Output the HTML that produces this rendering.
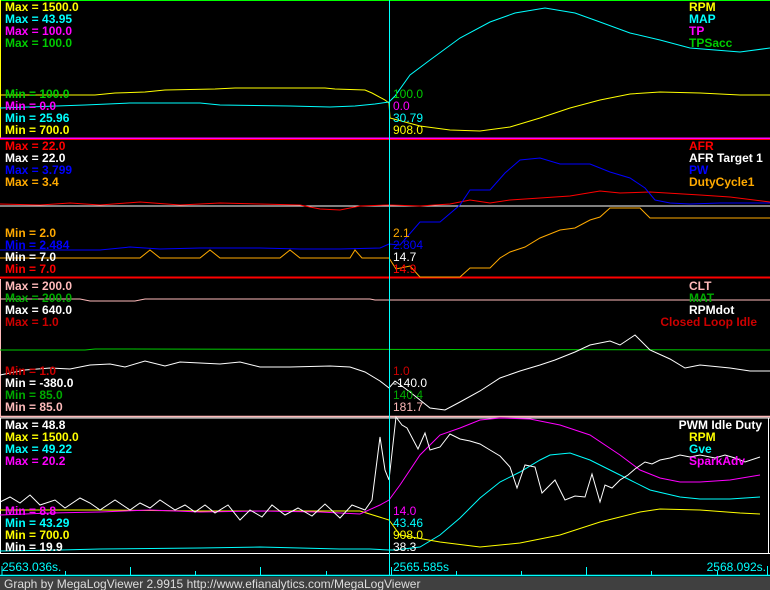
<!DOCTYPE html><html><head><style>body{margin:0;background:#000;width:770px;height:590px;overflow:hidden}svg{display:block}text{font-family:"Liberation Sans",sans-serif;font-size:12px}.b{font-weight:bold}</style></head><body>
<svg width="770" height="590" xmlns="http://www.w3.org/2000/svg">
<rect width="770" height="590" fill="#000"/>
<g fill="none" stroke-width="1">
<line x1="0" y1="0.5" x2="770" y2="0.5" stroke="#0f0"/>
<line x1="0.5" y1="0" x2="0.5" y2="138" stroke="#ff0"/>
<line x1="0" y1="138.5" x2="770" y2="138.5" stroke="#f0f" stroke-width="2"/>
<line x1="0" y1="139.5" x2="770" y2="139.5" stroke="#f00"/>
<line x1="0" y1="277.5" x2="770" y2="277.5" stroke="#f00" stroke-width="2"/>
<line x1="0.5" y1="279" x2="0.5" y2="416" stroke="#fbb"/>
<line x1="0" y1="416.5" x2="770" y2="416.5" stroke="#fbb" stroke-width="1.5"/>
<line x1="0" y1="418" x2="770" y2="418" stroke="#fff"/>
<line x1="0.5" y1="418" x2="0.5" y2="553" stroke="#fff"/>
<line x1="0" y1="553.5" x2="770" y2="553.5" stroke="#fff"/>
<line x1="768.5" y1="418" x2="768.5" y2="553" stroke="#fff"/>
<polyline stroke="#ff0" points="0,95 95,95 115,93 145,92 165,90 215,89 235,88 325,88 335,89 365,90 372,93 385,100 389,103 390,118 420,126 450,130 480,131 510,127 540,118 570,108 600,100 630,94 660,92 700,93 740,95 770,95"/>
<polyline stroke="#0ff" points="0,108 85,105 130,103 200,103 220,105 290,106 330,107 355,106 375,104 389,102 395,96 410,75 430,60 460,38 490,22 515,13 545,8 575,13 600,22 630,33 660,40 690,48 715,50 740,52 770,48"/>
<polyline stroke="#fff" points="0,206 770,206"/>
<polyline stroke="#f00" points="0,204 40,205 70,203 100,205 140,202 180,205 220,203 260,204 300,205 320,209 340,210 360,206 389,205 420,206 450,204 470,200 490,203 510,200 540,198 570,196 600,191 620,193 650,192 700,195 730,197 770,202"/>
<polyline stroke="#00f" points="0,250 100,250 130,247 160,249 200,248 260,248 300,249 340,249 380,248 389,244 400,245 420,222 440,222 460,205 470,190 490,190 505,173 520,160 540,158 560,164 590,164 610,172 630,178 645,188 655,200 670,203 690,204 720,203 770,203"/>
<polyline stroke="#fa0" points="0,258 140,258 150,250 160,258 200,258 210,250 220,258 280,258 290,250 300,258 350,258 355,250 362,258 389,258 396,269 410,266 420,277 460,277 470,268 490,268 500,258 510,252 525,247 540,238 560,230 575,228 590,220 600,217 610,208 640,208 650,218 770,218"/>
<polyline stroke="#fbb" points="0,299 80,299 90,301 135,301 145,299 370,299 375,300 389,300 770,300"/>
<polyline stroke="#0c0" points="0,350 85,350 95,349 770,350"/>
<polyline stroke="#fff" points="0,375 25,370 50,368 70,369 90,365 110,364 125,367 145,361 165,366 180,362 200,363 220,364 240,362 260,367 290,367 330,366 350,367 365,372 380,381 389,388 395,381 410,392 430,408 445,410 460,402 480,391 500,378 520,371 540,365 555,360 575,352 590,345 610,341 620,345 635,335 650,350 670,359 685,368 700,365 730,368 750,371 770,371"/>
<polyline stroke="#0ff" points="0,551 60,550 100,549 200,548 260,547 300,548 340,549 370,549 389,550 395,550 420,547 440,535 460,518 480,498 500,482 520,472 540,460 550,455 570,453 590,460 610,470 630,480 650,490 680,497 700,499 730,499 760,497"/>
<polyline stroke="#ff0" points="0,510 100,510 200,511 300,511 360,511 389,520 400,535 440,542 480,547 520,543 560,535 600,522 640,512 660,509 700,510 740,513 760,514"/>
<polyline stroke="#f0f" points="0,515 50,513 100,512 150,510 200,512 260,511 320,512 360,514 380,505 389,500 400,485 420,455 440,435 460,428 480,420 500,418 530,419 560,425 590,435 620,455 640,470 660,478 680,482 700,482 730,480 760,475"/>
<polyline stroke="#fff" points="0,502 10,497 20,503 30,495 40,505 55,500 65,508 80,498 90,503 100,510 115,500 130,510 140,503 150,508 160,500 175,510 185,505 195,512 205,505 215,513 228,505 240,520 250,510 262,517 272,505 285,515 298,508 312,516 325,504 340,518 352,505 365,510 372,500 380,437 385,470 389,480 396,417 402,425 407,428 418,449 425,433 430,450 440,447 450,434 460,439 470,441 480,444 490,450 500,456 510,467 517,488 525,465 535,467 542,493 555,480 565,500 575,496 585,497 592,474 600,502 605,485 612,488 620,480 628,475 635,469 645,462 652,464 660,460 670,458 680,455 690,457 700,455 715,458 725,455 735,458 745,462 760,457"/>
<line x1="389.5" y1="0" x2="389.5" y2="576" stroke="#0ff"/>
<line x1="0" y1="575.5" x2="770" y2="575.5" stroke="#0ff" stroke-width="1.5"/>
<g stroke="#0ff"><line x1="2" y1="566" x2="2" y2="576"/><line x1="65.5" y1="571" x2="65.5" y2="576"/><line x1="130.5" y1="567" x2="130.5" y2="576"/><line x1="195.5" y1="571" x2="195.5" y2="576"/><line x1="260.5" y1="567" x2="260.5" y2="576"/><line x1="326.5" y1="571" x2="326.5" y2="576"/><line x1="391.5" y1="567" x2="391.5" y2="576"/><line x1="456.5" y1="571" x2="456.5" y2="576"/><line x1="521.5" y1="571" x2="521.5" y2="576"/><line x1="586.5" y1="567" x2="586.5" y2="576"/><line x1="651.5" y1="571" x2="651.5" y2="576"/><line x1="717.5" y1="571" x2="717.5" y2="576"/><line x1="767.5" y1="566" x2="767.5" y2="576"/></g>
</g>
<rect x="0" y="577" width="770" height="13" fill="#404040"/>
<text x="4" y="588" fill="#ddd" font-size="12">Graph by MegaLogViewer 2.9915 http://www.efianalytics.com/MegaLogViewer</text>
<g fill="#0ff"><text x="2" y="571">2563.036s.</text><text x="393" y="571">2565.585s</text><text x="766" y="571" text-anchor="end">2568.092s.</text></g>
<g class="b">
<text x="5" y="11" fill="#ff0">Max = 1500.0</text><text x="5" y="23" fill="#0ff">Max = 43.95</text><text x="5" y="35" fill="#f0f">Max = 100.0</text><text x="5" y="47" fill="#0c0">Max = 100.0</text>
<text x="5" y="98" fill="#0c0">Min = 100.0</text><text x="5" y="110" fill="#f0f">Min = 0.0</text><text x="5" y="122" fill="#0ff">Min = 25.96</text><text x="5" y="134" fill="#ff0">Min = 700.0</text>
<text x="689" y="11" fill="#ff0">RPM</text><text x="689" y="23" fill="#0ff">MAP</text><text x="689" y="35" fill="#f0f">TP</text><text x="689" y="47" fill="#0c0">TPSacc</text>
<text x="5" y="150" fill="#f00">Max = 22.0</text><text x="5" y="162" fill="#fff">Max = 22.0</text><text x="5" y="174" fill="#00f">Max = 3.799</text><text x="5" y="186" fill="#fa0">Max = 3.4</text>
<text x="5" y="237" fill="#fa0">Min = 2.0</text><text x="5" y="249" fill="#00f">Min = 2.484</text><text x="5" y="261" fill="#fff">Min = 7.0</text><text x="5" y="273" fill="#f00">Min = 7.0</text>
<text x="689" y="150" fill="#f00">AFR</text><text x="689" y="162" fill="#fff">AFR Target 1</text><text x="689" y="174" fill="#00f">PW</text><text x="689" y="186" fill="#fa0">DutyCycle1</text>
<text x="5" y="290" fill="#fbb">Max = 200.0</text><text x="5" y="302" fill="#0a0">Max = 200.0</text><text x="5" y="314" fill="#fff">Max = 640.0</text><text x="5" y="326" fill="#c00">Max = 1.0</text>
<text x="5" y="375" fill="#c00">Min = 1.0</text><text x="5" y="387" fill="#fff">Min = -380.0</text><text x="5" y="399" fill="#0a0">Min = 85.0</text><text x="5" y="411" fill="#fbb">Min = 85.0</text>
<text x="689" y="290" fill="#fbb">CLT</text><text x="689" y="302" fill="#0a0">MAT</text><text x="689" y="314" fill="#fff">RPMdot</text><text x="757" y="326" fill="#c00" text-anchor="end">Closed Loop Idle</text>
<text x="5" y="429" fill="#fff">Max = 48.8</text><text x="5" y="441" fill="#ff0">Max = 1500.0</text><text x="5" y="453" fill="#0ff">Max = 49.22</text><text x="5" y="465" fill="#f0f">Max = 20.2</text>
<text x="5" y="515" fill="#f0f">Min = 8.8</text><text x="5" y="527" fill="#0ff">Min = 43.29</text><text x="5" y="539" fill="#ff0">Min = 700.0</text><text x="5" y="551" fill="#fff">Min = 19.9</text>
<text x="762" y="429" fill="#fff" text-anchor="end">PWM Idle Duty</text><text x="689" y="441" fill="#ff0">RPM</text><text x="689" y="453" fill="#0ff">Gve</text><text x="689" y="465" fill="#f0f">SparkAdv</text>
</g>
<g>
<text x="393" y="98" fill="#0c0">100.0</text><text x="393" y="110" fill="#f0f">0.0</text><text x="393" y="122" fill="#0ff">30.79</text><text x="393" y="134" fill="#ff0">908.0</text>
<text x="393" y="237" fill="#fa0">2.1</text><text x="393" y="249" fill="#00f">2.804</text><text x="393" y="261" fill="#fff">14.7</text><text x="393" y="273" fill="#f00">14.9</text>
<text x="393" y="375" fill="#c00">1.0</text><text x="393" y="387" fill="#fff">-140.0</text><text x="393" y="399" fill="#0a0">140.4</text><text x="393" y="411" fill="#fbb">181.7</text>
<text x="393" y="515" fill="#f0f">14.0</text><text x="393" y="527" fill="#0ff">43.46</text><text x="393" y="539" fill="#ff0">908.0</text><text x="393" y="551" fill="#fff">38.3</text>
</g>
</svg></body></html>
